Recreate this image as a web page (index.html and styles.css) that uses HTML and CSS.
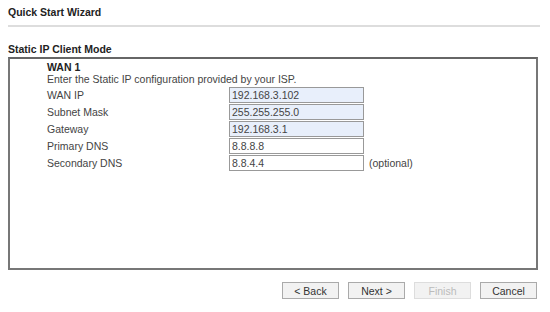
FILE: index.html
```html
<!DOCTYPE html>
<html lang="en">
<head>
  <meta charset="UTF-8" />
  <title>Quick Start Wizard</title>
  <link rel="stylesheet" href="styles.css">
</head>
<body>
  <div class="page">
    <div class="title">Quick Start Wizard</div>
    <div class="section">Static IP Client Mode</div>
    <div class="panel">
      <div class="wan">WAN 1</div>
      <div class="intro">Enter the Static IP configuration provided by your ISP.</div>
      <div class="row">
        <span class="label">WAN IP</span>
        <input class="field filled" type="text" value="192.168.3.102" />
      </div>
      <div class="row">
        <span class="label">Subnet Mask</span>
        <input class="field filled" type="text" value="255.255.255.0" />
      </div>
      <div class="row">
        <span class="label">Gateway</span>
        <input class="field filled" type="text" value="192.168.3.1" />
      </div>
      <div class="row">
        <span class="label">Primary DNS</span>
        <input class="field" type="text" value="8.8.8.8" />
      </div>
      <div class="row">
        <span class="label">Secondary DNS</span>
        <input class="field" type="text" value="8.8.4.4" />
        <span class="hint">(optional)</span>
      </div>
    </div>
    <div class="buttons">
      <button class="btn">&lt; Back</button>
      <button class="btn">Next &gt;</button>
      <button class="btn" disabled>Finish</button>
      <button class="btn">Cancel</button>
    </div>
  </div>
</body>
</html>
```

FILE: styles.css
```css
body {
  margin: 0;
  background: #fff;
  font-family: 'Liberation Sans', Arial, sans-serif;
  font-size: 10.5px;
  color: #333;
}
.page {
  padding: 6px 12px 0 8px;
}
.title {
  font-weight: bold;
  color: #222;
  padding-bottom: 7px;
  border-bottom: 2px solid #ddd;
  margin-right: -2px;
}
.section {
  font-weight: bold;
  color: #222;
  margin-top: 16px;
  margin-bottom: 2px;
}
.panel {
  height: 207px;
  border: 2px solid #777;
  border-top-color: #666;
  padding: 2px 0 0 37px;
}
.wan {
  font-weight: bold;
  color: #222;
}
.intro {
  margin-bottom: 1px;
  color: #444;
}
.row {
  display: flex;
  align-items: center;
  height: 17px;
  color: #444;
}
.label {
  width: 182px;
}
.field {
  box-sizing: border-box;
  width: 135px;
  height: 16px;
  padding: 0 2px;
  border: 1px solid #999;
  font-family: inherit;
  font-size: 10.5px;
  color: #444;
  background: #fff;
}
.filled {
  background: #e8effb;
}
.hint {
  margin-left: 5px;
}
.buttons {
  display: flex;
  justify-content: flex-end;
  gap: 9px;
  margin-top: 12px;
  margin-right: 1px;
}
.btn {
  width: 57px;
  height: 17px;
  padding: 0;
  font-family: inherit;
  font-size: 10.5px;
  color: #333;
  background: #f2f2f2;
  border: 1px solid #aaa;
}
.btn:disabled {
  color: #bbb;
  border-color: #ddd;
}
```
